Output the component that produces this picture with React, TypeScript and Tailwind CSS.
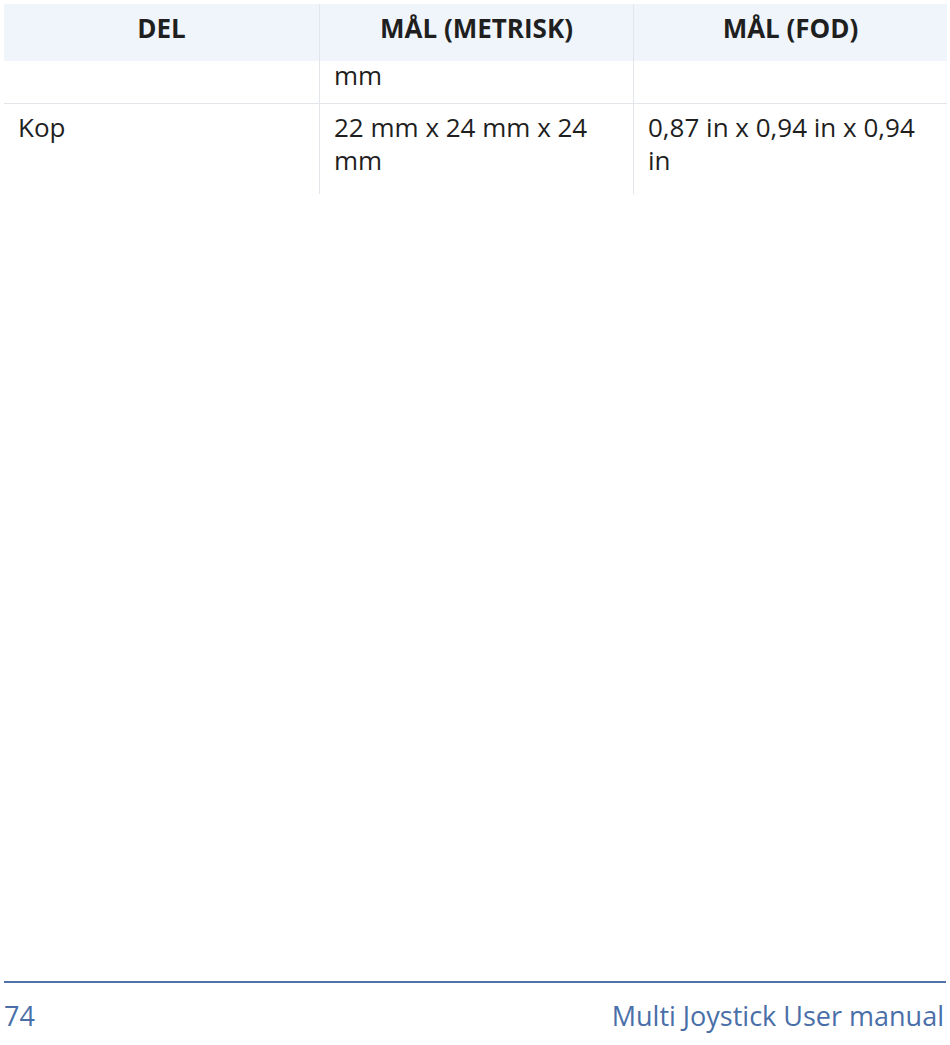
export default function App() {
  return (
    <div className="w-[950px] h-[1045px] bg-white relative flex flex-col" style={{ fontFamily: '"Open Sans", sans-serif' }}>
      <div className="pt-[4px] px-[4px]">
        <div className="grid grid-cols-[315px_314px_314px] text-[#1f1f1f]">
          <div className="h-[57px] bg-[#f0f5fc] flex justify-center font-bold text-[26px] leading-[34px] pt-[7px]">DEL</div>
          <div className="h-[57px] bg-[#f0f5fc] border-l border-[#e2e6ea] flex justify-center font-bold text-[26px] leading-[34px] pt-[7px]">MÅL (METRISK)</div>
          <div className="h-[57px] bg-[#f0f5fc] border-l border-[#e2e6ea] flex justify-center font-bold text-[26px] leading-[34px] pt-[7px]">MÅL (FOD)</div>

          <div className="h-[43px] border-b border-[#e2e6ea]"></div>
          <div className="h-[43px] border-l border-b border-[#e2e6ea] pl-[14px] text-[26px] leading-[28px]">mm</div>
          <div className="h-[43px] border-l border-b border-[#e2e6ea]"></div>

          <div className="pl-[14px] pt-[7px] pb-[17px] text-[26px] leading-[33px]">Kop</div>
          <div className="border-l border-[#e2e6ea] pl-[14px] pr-[16px] pt-[7px] pb-[17px] text-[26px] leading-[33px]">22 mm x 24 mm x 24 mm</div>
          <div className="border-l border-[#e2e6ea] pl-[14px] pr-[16px] pt-[7px] pb-[17px] text-[26px] leading-[33px]">0,87 in x 0,94 in x 0,94 in</div>
        </div>
      </div>
      <div className="flex-1"></div>
      <div className="px-[4px] pb-[11px]">
        <div className="h-[2px] bg-[#4f72a8]"></div>
        <div className="flex justify-between items-center text-[#4a6fa8] text-[27px] leading-[36px] pt-[15px] pr-[2px]">
          <span>74</span>
          <span>Multi Joystick User manual</span>
        </div>
      </div>
    </div>
  );
}
